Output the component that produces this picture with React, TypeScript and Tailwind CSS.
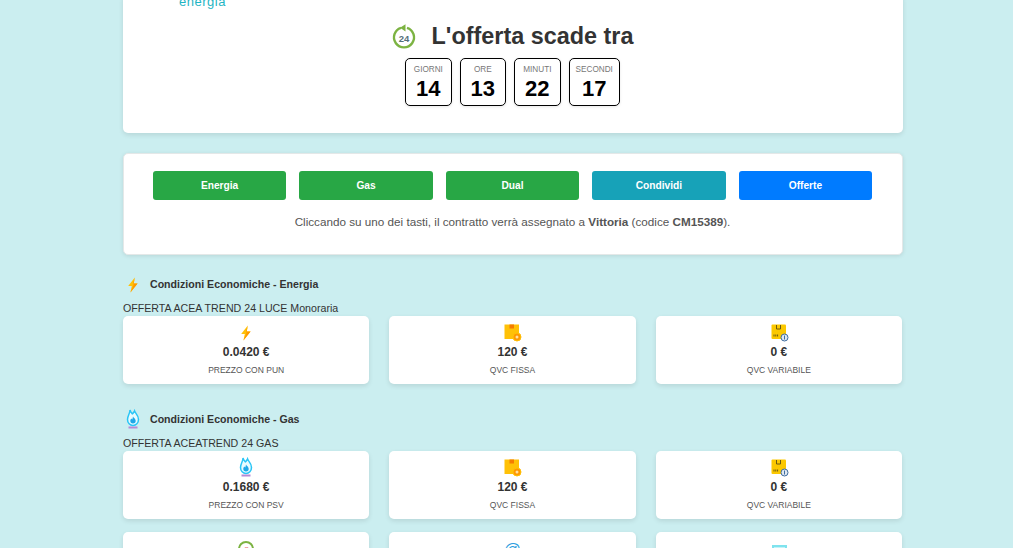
const font = { fontFamily: '"Liberation Sans", Arial, sans-serif' }

function Bolt() {
  return (
    <svg width="16" height="16" viewBox="0 0 16 16">
      <path d="M9.800 0.500 3.200 9h3.600l-1.400 6.600L12.600 6.600H8.800z" fill="#ffc107" />
      <path d="M9.800 0.500 8 6.600h4.600L5.400 15.600 8.200 9z" fill="#ff9800" />
    </svg>
  )
}

function Flame() {
  return (
    <svg width="16" height="20" viewBox="0 0 16 20" className="-mt-[3px]">
      <path d="M5 1c.5 2.500 1.500 3 2.500 3.800C8.500 3.500 9 3 9.500 2c.3 1.500 4 4 4 8.500C13.500 14 11 16.500 8 16.500S2.500 14 2.500 10.500C2.500 6.500 5 5 5 1z" fill="#e8fbff" stroke="#29c5f6" strokeWidth="1.500" />
      <path d="M8 7.500c.4 1.300 2.700 2.200 2.700 4.300a2.700 2.700 0 0 1-5.400 0c0-1 .6-1.600 1-2.200.3.500.6.700 1 .8.300-.9.500-1.800.7-2.900z" fill="#1ea7e8" />
      <rect x="3.500" y="17.500" width="9" height="2" fill="#b58ad6" />
    </svg>
  )
}

function BoxFixed() {
  return (
    <svg width="18" height="18" viewBox="0 0 18 18" className="ml-[2px]">
      <rect x="0.500" y="0.500" width="14.500" height="14.500" fill="#ffc107" />
      <rect x="5.500" y="0.500" width="4.500" height="4" fill="#f57c00" />
      <circle cx="13" cy="13" r="4" fill="#ff9800" stroke="#ffc107" strokeWidth="1" />
      <circle cx="13" cy="13" r="1.500" fill="#ffe0a0" />
    </svg>
  )
}

function BoxVariable() {
  return (
    <svg width="18" height="18" viewBox="0 0 18 18" className="ml-[2px]">
      <rect x="0.500" y="0.500" width="14.500" height="14.500" rx="1" fill="#fbc800" />
      <path d="M5.500 1v4h4V1" fill="none" stroke="#6b5a10" strokeWidth="1" />
      <path d="M3 10.500v2M4.800 10.500v2M6.600 10.500v2" stroke="#6b5a10" strokeWidth="1" />
      <circle cx="13.500" cy="13.500" r="3.500" fill="#dfe8f2" stroke="#3f6d9e" strokeWidth="1" />
      <path d="M13.500 11.500v4" stroke="#3f6d9e" strokeWidth="1" />
    </svg>
  )
}

function Clock24() {
  return (
    <svg width="26" height="26" viewBox="0 0 26 26">
      <path d="M16 3.800a10 10 0 1 1-6 0" fill="none" stroke="#7cb342" strokeWidth="2.400" />
      <path d="M9 3.800 14.500 0.300V7.500z" fill="#7cb342" />
      <text x="13" y="17.500" textAnchor="middle" fontSize="9.500" fontWeight="700" fill="#546e7a" style={font}>24</text>
    </svg>
  )
}

const countdown = [
  { label: 'GIORNI', value: '14' },
  { label: 'ORE', value: '13' },
  { label: 'MINUTI', value: '22' },
  { label: 'SECONDI', value: '17' },
]

const buttons = [
  { label: 'Energia', color: 'bg-[#28a745]' },
  { label: 'Gas', color: 'bg-[#28a745]' },
  { label: 'Dual', color: 'bg-[#28a745]' },
  { label: 'Condividi', color: 'bg-[#17a2b8]' },
  { label: 'Offerte', color: 'bg-[#007bff]' },
]

function PriceCard({ icon, value, label }: { icon?: React.ReactNode; value?: string; label?: string }) {
  return (
    <div className="h-[68px] rounded-[5px] bg-white shadow-[0_2px_5px_rgba(0,0,0,0.1)] flex flex-col items-center pt-[8px]">
      <div className="h-[18px] flex items-center justify-center">{icon}</div>
      <div className="mt-[1px] text-[12px] leading-[18px] font-bold text-[#333]">{value}</div>
      <div className="mt-[2px] text-[8.500px] leading-[14px] text-[#555]">{label}</div>
    </div>
  )
}

function Section({ icon, title, offer, first }: { icon: React.ReactNode; title: string; offer: string; first: React.ReactNode }) {
  return (
    <div>
      <div className="flex items-center h-[18px]">
        <div className="w-[20px] flex justify-center">{icon}</div>
        <h3 className="ml-[7px] text-[10.600px] font-bold text-[#333]">{title}</h3>
      </div>
      <p className="mt-[8px] text-[10.650px] leading-[13px] text-[#333]">{offer}</p>
      <div className="mt-[1px] grid grid-cols-3 gap-5">
        {first}
        <PriceCard icon={<BoxFixed />} value="120 €" label="QVC FISSA" />
        <PriceCard icon={<BoxVariable />} value="0 €" label="QVC VARIABILE" />
      </div>
    </div>
  )
}

export default function App() {
  return (
    <div className="h-[548px] overflow-hidden bg-[#cbeef0]" style={font}>
      <div className="w-[780px] ml-[123px] -mt-[4px]">
        <div className="h-[137px] rounded-b-[5px] bg-white shadow-[0_2px_5px_rgba(0,0,0,0.1)] relative">
          <span className="absolute left-[56px] -top-[1px] text-[13px] leading-[14px] font-medium tracking-[0.5px] text-[#1fb5c4]">energia</span>
          <div className="pt-[27px] pr-[2px] flex items-center justify-center gap-[15px]">
            <Clock24 />
            <h2 className="text-[23.400px] leading-[27px] font-bold text-[#333]">L'offerta scade tra</h2>
          </div>
          <div className="mt-[8px] pr-[1px] flex justify-center gap-2">
            {countdown.map((c) => (
              <div key={c.label} className="min-w-[46.500px] h-[48px] px-[6px] rounded-[5px] border border-black bg-white flex flex-col items-center pt-[5px] shadow-[0_1px_3px_rgba(0,0,0,0.1)]">
                <span className="text-[8.200px] leading-[11px] text-[#777]">{c.label}</span>
                <span className="text-[22px] leading-[25px] font-bold text-black mt-[1px]">{c.value}</span>
              </div>
            ))}
          </div>
        </div>

        <div className="mt-[20px] h-[102px] rounded-[5px] bg-white border border-[#e4e8e8] shadow-[0_1px_4px_rgba(0,0,0,0.1)] pl-[29px] pr-[30px] pt-[17px]">
          <div className="grid grid-cols-5 gap-[13.300px]">
            {buttons.map((b) => (
              <button key={b.label} className={`h-[29px] rounded-[3px] text-[10.200px] font-bold text-white ${b.color}`}>
                {b.label}
              </button>
            ))}
          </div>
          <p className="mt-[14px] text-center text-[11.700px] leading-[16px] text-[#555]">
            Cliccando su uno dei tasti, il contratto verrà assegnato a <b>Vittoria</b> (codice <b>CM15389</b>).
          </p>
        </div>

        <div className="w-[779px]">
          <div className="mt-[21px]">
            <Section
              icon={<Bolt />}
              title="Condizioni Economiche - Energia"
              offer="OFFERTA ACEA TREND 24 LUCE Monoraria"
              first={<PriceCard icon={<Bolt />} value="0.0420 €" label="PREZZO CON PUN" />}
            />
          </div>
          <div className="mt-[27px]">
            <Section
              icon={<Flame />}
              title="Condizioni Economiche - Gas"
              offer="OFFERTA ACEATREND 24 GAS"
              first={<PriceCard icon={<Flame />} value="0.1680 €" label="PREZZO CON PSV" />}
            />
          </div>
          <div className="mt-[13px] grid grid-cols-3 gap-5">
            <PriceCard icon={<div className="mt-[2px] w-[16px] h-[18px] rounded-full border-2 border-[#7cb342] text-[8px] leading-[14px] text-center text-[#e57373]">€</div>} />
            <PriceCard icon={<div className="mt-[2px] text-[17px] leading-[18px] text-[#2f9fe0]">@</div>} />
            <PriceCard icon={<div className="mt-[6px] ml-[1px] w-[15px] h-[14px] border-2 border-[#7fe3ee] bg-[#c4f3f8]" />} />
          </div>
        </div>
      </div>
    </div>
  )
}
